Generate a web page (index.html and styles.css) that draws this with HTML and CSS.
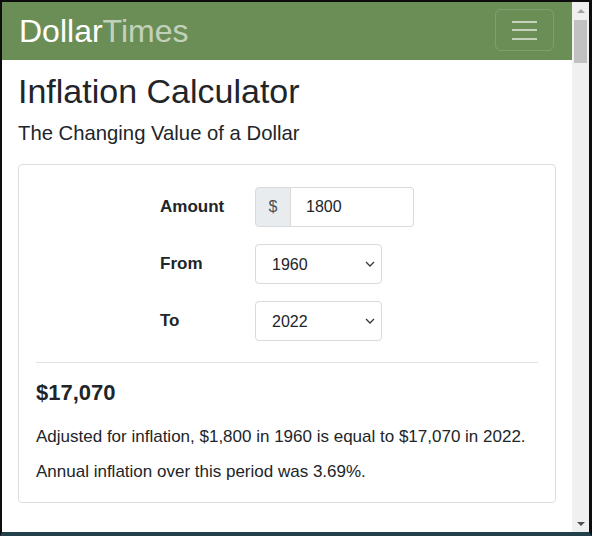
FILE: index.html
```html
<!DOCTYPE html>
<html lang="en">

<head>
  <meta charset="UTF-8">
  <meta name="viewport" content="width=device-width, initial-scale=1.0">
  <title>DollarTimes - Inflation Calculator</title>
  <link rel="stylesheet" href="styles.css">
</head>

<body>
  <div class="frame">
    <div class="viewport">
      <header class="navbar">
        <a href="#" class="brand">Dollar<span class="brand-light">Times</span></a>
        <button class="toggler" aria-label="Menu">
          <span></span>
          <span></span>
          <span></span>
        </button>
      </header>

      <main class="container">
        <h1 class="title">Inflation Calculator</h1>
        <p class="subtitle">The Changing Value of a Dollar</p>

        <section class="card">
          <form class="calc-form">
            <label class="calc-label" for="amount">Amount</label>
            <div class="input-group">
              <span class="addon">$</span>
              <input id="amount" class="amount-input" type="text" value="1800">
            </div>

            <label class="calc-label" for="from">From</label>
            <div class="select-wrap">
              <select id="from" class="year-select">
                <option>1960</option>
              </select>
              <svg class="chevron" width="10" height="6" viewBox="0 0 10 6"><path d="M1 1l4 4 4-4" fill="none" stroke="#343a40" stroke-width="1.3"/></svg>
            </div>

            <label class="calc-label" for="to">To</label>
            <div class="select-wrap">
              <select id="to" class="year-select">
                <option>2022</option>
              </select>
              <svg class="chevron" width="10" height="6" viewBox="0 0 10 6"><path d="M1 1l4 4 4-4" fill="none" stroke="#343a40" stroke-width="1.3"/></svg>
            </div>
          </form>

          <hr class="divider">

          <h4 class="result">$17,070</h4>
          <p class="result-text">Adjusted for inflation, $1,800 in 1960 is equal to $17,070 in 2022.</p>
          <p class="result-text">Annual inflation over this period was 3.69%.</p>
        </section>
      </main>
    </div>

    <div class="scrollbar">
      <div class="scroll-btn"><span class="arrow-up"></span></div>
      <div class="scroll-track"><div class="scroll-thumb"></div></div>
      <div class="scroll-btn"><span class="arrow-down"></span></div>
    </div>
  </div>
</body>

</html>
```

FILE: styles.css
```css
html,
body {
  margin: 0;
  padding: 0;
}

body {
  font-family: "Liberation Sans", Arial, sans-serif;
  color: #212529;
  background: #fff;
}

.frame {
  width: 592px;
  height: 536px;
  box-sizing: border-box;
  border: 2px solid #0d0d0d;
  border-right-width: 3px;
  border-bottom: 4px solid #22404a;
  display: flex;
}

.viewport {
  flex: 1;
  overflow: hidden;
  background: #fff;
}

/* top bar */
.navbar {
  height: 58px;
  background-color: #6b8e57;
  padding: 0 18px 0 17px;
  display: flex;
  justify-content: space-between;
  align-items: center;
}

.brand {
  font-size: 32px;
  color: #fff;
  text-decoration: none;
  line-height: 1;
}

.brand-light {
  color: rgba(255, 255, 255, 0.62);
}

.toggler {
  width: 59px;
  height: 42px;
  background: transparent;
  border: 1px solid rgba(255, 255, 255, 0.15);
  border-radius: 6px;
  display: flex;
  flex-direction: column;
  justify-content: center;
  align-items: center;
  gap: 6.5px;
  padding: 0;
  margin-top: -2px;
}

.toggler span {
  display: block;
  width: 25px;
  height: 2px;
  background: rgba(255, 255, 255, 0.6);
}

/* page */
.container {
  padding: 0 16px;
}

.title {
  font-size: 34px;
  font-weight: 400;
  line-height: 1.2;
  margin: 11px 0 0;
}

.subtitle {
  font-size: 20.3px;
  line-height: 1.2;
  margin: 9px 0 19px;
}

.card {
  border: 1px solid #dedede;
  border-radius: 4px;
  padding: 22px 17px 18px;
}

.calc-form {
  display: grid;
  grid-template-columns: 95px auto;
  grid-auto-rows: 40px;
  row-gap: 17px;
  align-items: center;
  justify-content: start;
  padding-left: 124px;
}

.calc-label {
  font-size: 17px;
  font-weight: 700;
}

.input-group {
  display: flex;
  height: 40px;
  width: 159px;
}

.addon {
  width: 36px;
  box-sizing: border-box;
  display: flex;
  align-items: center;
  justify-content: center;
  background: #e9ecef;
  border: 1px solid #dadada;
  border-radius: 4px 0 0 4px;
  font-size: 16px;
  color: #495057;
}

.amount-input {
  flex: 1;
  min-width: 0;
  box-sizing: border-box;
  border: 1px solid #dadada;
  border-left: none;
  border-radius: 0 4px 4px 0;
  padding: 0 0 0 15px;
  font-family: inherit;
  font-size: 16px;
  color: #212529;
  outline: none;
}

.select-wrap {
  position: relative;
  width: 127px;
  height: 40px;
}

.year-select {
  appearance: none;
  -webkit-appearance: none;
  width: 100%;
  height: 100%;
  box-sizing: border-box;
  border: 1px solid #dadada;
  border-radius: 4px;
  background: #fff;
  padding: 0 0 0 16px;
  font-family: inherit;
  font-size: 16px;
  color: #212529;
}

.chevron {
  position: absolute;
  right: 7px;
  top: 17px;
  pointer-events: none;
}

.divider {
  border: none;
  border-top: 1px solid #e3e3e3;
  margin: 21px 0 17px;
}

.result {
  font-size: 22px;
  font-weight: 700;
  line-height: 1.2;
  margin: 0 0 18px;
}

.result-text {
  font-size: 17px;
  line-height: 24px;
  margin: 0 0 11px;
}

.result-text:last-child {
  margin-bottom: 0;
}

/* fake window scrollbar */
.scrollbar {
  width: 17px;
  background: #f0f0f0;
  display: flex;
  flex-direction: column;
}

.scroll-btn {
  height: 17px;
  display: flex;
  align-items: center;
  justify-content: center;
}

.arrow-up {
  width: 0;
  height: 0;
  border-left: 4px solid transparent;
  border-right: 4px solid transparent;
  border-bottom: 4px solid #a3a3a3;
}

.arrow-down {
  width: 0;
  height: 0;
  border-left: 4px solid transparent;
  border-right: 4px solid transparent;
  border-top: 4px solid #505050;
}

.scroll-track {
  flex: 1;
  padding: 1px 2px 0;
}

.scroll-thumb {
  height: 43px;
  background: #c1c1c1;
}
```
